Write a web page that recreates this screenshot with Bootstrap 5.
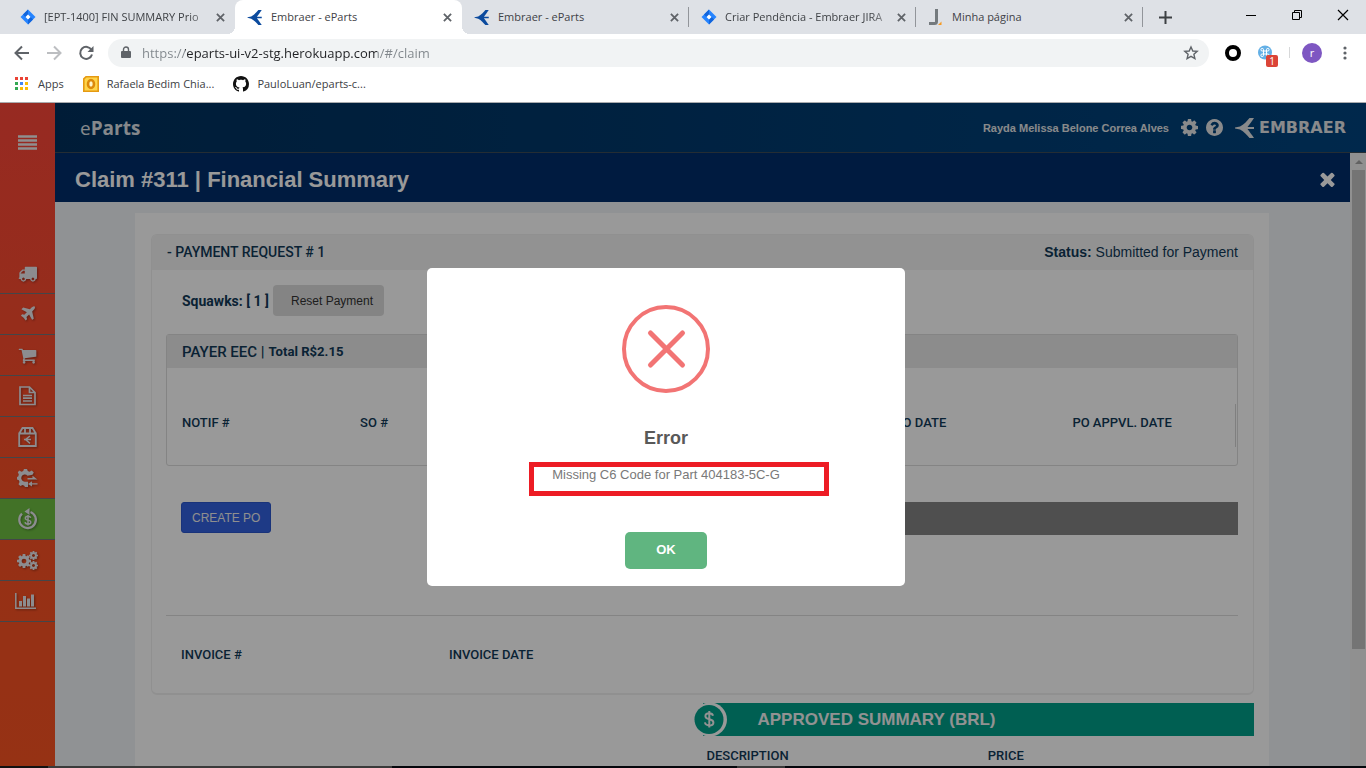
<!DOCTYPE html>
<html lang="en">
<head>
<meta charset="utf-8">
<meta name="viewport" content="width=device-width, initial-scale=1">
<title>Embraer - eParts</title>
<link href="https://cdn.jsdelivr.net/npm/bootstrap@5.3.0/dist/css/bootstrap.min.css" rel="stylesheet">
<style>
  :root { --ui: "Open Sans", "Noto Sans", sans-serif; --app: "Liberation Sans", Arial, sans-serif; --label: Roboto, "Liberation Sans", sans-serif; --ink: #113a58; }
  body { font-family: var(--app); font-size: 13px; line-height: 16px; color: var(--ink); }
  svg { display: block; flex: none; }
  button { font-family: inherit; }
  .plain { border: 0; background: none; padding: 0; color: inherit; display: flex; align-items: center; justify-content: center; }

  /* browser frame */
  .frame { font-family: var(--ui); font-size: 11px; color: #3c4043; background: #fff; border-bottom: 1px solid #a9abae; }
  .tabstrip { background: #dee1e6; height: 34px; padding-left: 8px; }
  .tab { flex: 0 1 227px; min-width: 0; padding: 0 10px 0 12px; position: relative; }
  .tab svg { color: #5f6368; }
  .tab .tab-text { white-space: nowrap; color: #3f4246; }
  .tab .fading { mask-image: linear-gradient(90deg, #000 145px, transparent 172px); -webkit-mask-image: linear-gradient(90deg, #000 145px, transparent 172px); }
  .tab.current { background: #fff; border-radius: 8px 8px 0 0; }
  .tab.current::before, .tab.current::after { content: ""; position: absolute; bottom: 0; width: 8px; height: 8px; }
  .tab.current::before { left: -8px; background: radial-gradient(circle at 0 0, transparent 8px, #fff 8px); }
  .tab.current::after { right: -8px; background: radial-gradient(circle at 100% 0, transparent 8px, #fff 8px); }
  .tab.divided { background: linear-gradient(#92959a, #92959a) right center / 1px 20px no-repeat; }
  .window-keys { gap: 34px; padding-right: 17px; color: #000; }
  .toolbar { height: 37px; padding: 0 16px 0 14px; color: #5f6368; }
  .omnibox { background: #f1f3f4; border-radius: 14px; height: 28px; padding: 0 10px 0 12px; gap: 10px; margin-left: 13px; }
  .omnibox input { border: 0; outline: 0; padding: 0; font-size: 13px; line-height: 20px; min-width: 0; color: transparent; background: linear-gradient(90deg, #80868b 43px, #202124 43px, #202124 235px, #80868b 235px); background-clip: text; -webkit-background-clip: text; }
  .nav-keys { gap: 16px; }
  .avatar { width: 20px; height: 20px; border-radius: 50%; background: #7e57c2; color: #fff; margin: 0 18px 0 12px; }
  .ext-badge { right: -5px; bottom: -6px; width: 12px; height: 12px; background: #db4437; color: #fff; font-size: 10px; line-height: 12px; border-radius: 2px; text-align: center; }
  .favorites { height: 31px; padding: 0 14px 5px; gap: 19px; }
  .favorites a { color: #3c4043; gap: 8px; }

  /* application */
  .side { width: 55px; flex: none; background: linear-gradient(#fc4639, #fa5025 60%, #fa5422); color: #eee; }
  .side .menu-key { height: 150px; padding-top: 32px; align-items: flex-start; }
  .side a { color: #e9e9ee; height: 41px; border-bottom: 1px solid #71767b; }
  .side a svg { filter: drop-shadow(1px 1px 1px rgba(0,0,0,.35)); }
  .side a.active { background: #6ebf41; }
  .topbar { height: 50px; padding: 0 20px 0 25px; background: linear-gradient(90deg, #00305d, #00447f); border-bottom: 1px solid #3c4c58; color: #e4e6e8; }
  .brand { font-family: var(--ui); font-size: 19px; color: #dfe3e8; }
  .user { font-size: 11px; }
  .wordmark { font-family: "DejaVu Sans", sans-serif; font-size: 16px; }
  .claimbar { height: 49px; padding: 4px 15px 0 20px; background: #002d6b; color: #fff; }
  .claimbar h1 { font-size: 22px; line-height: 26px; font-weight: bold; }
  .work { background: #f0f3f7; padding: 11px 81px 0 80px; }
  .sheet { background: #fff; padding: 21px 15px 0 16px; }
  .request { border: 1px solid #f1f1f1; border-bottom-width: 2px; border-radius: 6px; }
  .request-head { background: #f4f4f4; height: 35px; padding: 0 15px 2px; font-size: 14px; border-radius: 5px 5px 0 0; }
  .head-label, th { font-family: var(--label); font-weight: 500; }
  th { font-size: 13px; padding: 0; }
  .column-heads { table-layout: fixed; }
  .column-heads th { padding-left: 15px; }
  .request-body { padding: 15px 15px 30px 14px; }
  .squawks { font-size: 14px; }
  .reset { background: #dcdcdc; border: 0; border-radius: 4px; padding: 0 11px 0 18px; height: 31px; color: #333; font-size: 12px; }
  .payer { border: 1px solid #dcdcdc; border-radius: 3px; margin-top: 18px; }
  .payer-head { background: #e9e9e9; height: 33px; padding: 0 15px; font-size: 15px; }
  .payer-body { padding: 36px 1px 18px 0; }
  .payer-body th { height: 43px; padding-bottom: 6px; }
  .payer-body th:last-child { border-right: 1px solid #d4d4d4; }
  .create { height: 31px; padding: 0 10px; background: #3261df; border: 1px solid #2a55cc; border-radius: 3px; color: #eee; font-size: 12px; }
  .order-row { padding: 36px 0 80px 15px; }
  .strip { background: #848484; height: 33px; }
  .rule { border-top: 1px solid #dcdcdc; padding: 31px 0 0; }
  .summary-head { background: #009e89; color: #f4f4f4; height: 33px; padding-left: 55px; margin-bottom: 12px; font-size: 17px; font-weight: bold; }
  .coin { left: -10px; top: 0; width: 34px; height: 33px; }
  .scroll { width: 16px; flex: none; background: #f1f1f1; padding: 7px 1px 0 2px; color: #a3a3a3; }
  .thumb { background: #c1c1c1; height: 79%; margin-top: 6px; }

  /* error dialog */
  .shade { background: rgba(0,0,0,.4); padding: 0 34px 15px 0; }
  .dialog-box { width: 478px; background: #fff; border-radius: 5px; padding: 37px 0 17px; }
  .dialog-box h2 { font-size: 18px; line-height: 22px; font-weight: bold; color: #595959; margin: 34px 0 18px; }
  .dialog-box p { font-size: 13px; color: #797979; margin: 0 0 49px; }
  .ok { background: #60b580; color: #fff; border: 0; border-radius: 5px; width: 82px; height: 37px; padding: 0 0 2px; font-weight: bold; }
  .highlight { left: 102px; top: 194px; width: 300px; height: 34px; border: 5px solid #ed1c24; pointer-events: none; }
  .taskbar { height: 2px; background: linear-gradient(90deg, #111 48px, #3a3a3a 48px, #3a3a3a 392px, #05070c 392px, #05070c 737px, #3a3a3a 737px, #3a3a3a 785px, #05070c 785px); }
</style>
</head>
<body class="vh-100 d-flex flex-column overflow-hidden">

<svg class="d-none" aria-hidden="true">
  <symbol id="x" viewBox="0 0 10 10"><path d="M1 1l8 8M9 1L1 9" stroke="currentColor" stroke-width="2" fill="none"/></symbol>
  <symbol id="jira" viewBox="0 0 16 16"><path d="M8 0.500L15.500 8 8 15.500 0.500 8z" fill="#2684ff"/><path d="M8 .5v5L5.500 8 3 5.500zM8 15.500v-5L10.500 8l2.500 2.500z" fill="#1265dc"/><path d="M8 5.500L10.500 8 8 10.500 5.500 8z" fill="#fff"/></symbol>
  <symbol id="bird" viewBox="0 0 20 20"><path d="M0 9.600L5 8.500C9 6.500 12 3 14.500 0H19C17 3 14 7 12.500 9h6.500v2h-6.500c1.500 2 4.500 6 6.500 9h-4.500C12 17 9 13.500 5 11.500L0 10.400z" fill="currentColor"/></symbol>
  <symbol id="cog" viewBox="128 128 1536 1536"><path fill="currentColor" d="M1152 896q0-106-75-181t-181-75-181 75-75 181 75 181 181 75 181-75 75-181zm512-109v222q0 12-8 23t-20 13l-185 28q-19 54-39 91 35 50 107 138 10 12 10 25t-9 23q-27 37-99 108t-94 71q-12 0-26-9l-138-108q-44 23-91 38-16 136-29 186-7 28-36 28h-222q-14 0-24.500-8.500t-11.500-21.500l-28-184q-49-16-90-37l-141 107q-10 9-25 9-14 0-25-11-126-114-165-168-7-10-7-23 0-12 8-23 15-21 51-66.500t54-70.500q-27-50-41-99l-183-27q-13-2-21-12.500t-8-23.500v-222q0-12 8-23t19-13l186-28q14-46 39-92-40-57-107-138-10-12-10-24 0-10 9-23 26-36 98.500-107.500t94.500-71.500q13 0 26 10l138 107q44-23 91-38 16-136 29-186 7-28 36-28h222q14 0 24.500 8.500t11.500 21.500l28 184q49 16 90 37l142-107q9-9 24-9 13 0 25 10 129 119 165 170 7 8 7 22 0 12-8 23-15 21-51 66.500t-54 70.500q26 50 41 98l183 28q13 2 21 12.500t8 23.500z"/></symbol>
</svg>

<header class="frame flex-shrink-0">
  <div class="tabstrip d-flex align-items-stretch">
    <div class="tab d-flex align-items-center gap-2"><svg width="16" height="16"><use href="#jira"/></svg><span class="tab-text fading flex-fill">[EPT-1400] FIN SUMMARY Prio</span><button class="plain" aria-label="Close tab"><svg width="9" height="9"><use href="#x"/></svg></button></div>
    <div class="tab current d-flex align-items-center gap-2"><svg width="16" height="15" style="color:#0b4a9e"><use href="#bird"/></svg><span class="tab-text flex-fill">Embraer - eParts</span><button class="plain" aria-label="Close tab"><svg width="9" height="9"><use href="#x"/></svg></button></div>
    <div class="tab divided d-flex align-items-center gap-2"><svg width="16" height="15" style="color:#0b4a9e"><use href="#bird"/></svg><span class="tab-text flex-fill">Embraer - eParts</span><button class="plain" aria-label="Close tab"><svg width="9" height="9"><use href="#x"/></svg></button></div>
    <div class="tab divided d-flex align-items-center gap-2"><svg width="16" height="16"><use href="#jira"/></svg><span class="tab-text fading flex-fill">Criar Pendência - Embraer JIRA</span><button class="plain" aria-label="Close tab"><svg width="9" height="9"><use href="#x"/></svg></button></div>
    <div class="tab divided d-flex align-items-center gap-2"><svg width="16" height="17" viewBox="0 0 16 17"><path d="M8.500 0v12.500q0 2-2 2H1" stroke="#747a7e" stroke-width="3" fill="none"/><path d="M13.500 12.500V16h-3.500z" fill="#f59a23"/></svg><span class="tab-text flex-fill">Minha página</span><button class="plain" aria-label="Close tab"><svg width="9" height="9"><use href="#x"/></svg></button></div>
    <button class="plain ms-3" aria-label="New tab"><svg width="13" height="13" viewBox="0 0 13 13"><path d="M6.500 0v13M0 6.500h13" stroke="#3c4043" stroke-width="2"/></svg></button>
    <div class="window-keys d-flex align-items-center ms-auto pb-1">
      <button class="plain" aria-label="Minimize"><svg width="12" height="11"><path d="M1 5.500h10" stroke="#000"/></svg></button>
      <button class="plain" aria-label="Restore"><svg width="12" height="12"><path d="M1.500 3.500h7v7h-7zM3.500 3V1.500h7v7H9" fill="none" stroke="#000"/></svg></button>
      <button class="plain" aria-label="Close"><svg width="12" height="12"><path d="M1 1l10 10M11 1L1 11" stroke="#000" stroke-width="1.200"/></svg></button>
    </div>
  </div>
  <div class="toolbar d-flex align-items-center">
    <div class="nav-keys d-flex">
      <button class="plain" aria-label="Back"><svg width="16" height="16" viewBox="0 0 16 16"><path d="M15 8H2M8 1.500L1.500 8 8 14.500" fill="none" stroke="currentColor" stroke-width="2"/></svg></button>
      <button class="plain" aria-label="Forward"><svg width="16" height="16" viewBox="0 0 16 16"><path d="M1 8h13M8 1.500L14.500 8 8 14.500" fill="none" stroke="#bcbec1" stroke-width="2"/></svg></button>
      <button class="plain" aria-label="Reload"><svg width="17" height="16" viewBox="0 0 17 16"><path d="M13.500 5A6 6 0 1 0 14 9.500" fill="none" stroke="currentColor" stroke-width="2"/><path d="M15.500 1v6h-6z" fill="currentColor"/></svg></button>
    </div>
    <div class="omnibox d-flex align-items-center flex-fill">
      <svg width="12" height="14" viewBox="0 0 12 14"><path d="M2 5h8q1 0 1 1v5q0 1-1 1H2q-1 0-1-1V6q0-1 1-1z" fill="currentColor"/><path d="M3.500 5V3.500a2.500 2.500 0 0 1 5 0V5" fill="none" stroke="currentColor" stroke-width="1.400"/></svg>
      <input class="flex-fill" type="text" aria-label="Address" value="https://eparts-ui-v2-stg.herokuapp.com/#/claim">
      <button class="plain" aria-label="Bookmark"><svg width="16" height="16" viewBox="0 0 16 16"><path d="M8 2l1.800 4 4.400.4-3.300 2.900 1 4.300L8 11.300l-3.900 2.300 1-4.300L1.800 6.400 6.200 6z" fill="none" stroke="currentColor" stroke-width="1.400"/></svg></button>
    </div>
    <div class="d-flex align-items-center ms-3">
      <svg width="16" height="16"><circle cx="8" cy="8" r="6" fill="none" stroke="#000" stroke-width="4"/></svg>
      <span class="position-relative mx-3"><svg width="16" height="16" viewBox="0 0 16 16"><circle cx="8" cy="7.500" r="7" fill="#64b0e6"/><path d="M6.500 6h3v3h-3zM6.500 6H5.200A1.300 1.300 0 1 1 6.500 4.700zM9.500 6V4.700A1.300 1.300 0 1 1 10.800 6zM9.500 9h1.300a1.300 1.300 0 1 1-1.300 1.300zM6.500 9v1.300A1.300 1.300 0 1 1 5.200 9z" fill="none" stroke="#fff"/></svg><span class="ext-badge position-absolute">1</span></span>
      <span class="vr align-self-center"></span>
      <button class="plain avatar" aria-label="Profile">r</button>
      <button class="plain" aria-label="Menu"><svg width="10" height="14"><g fill="#5f6368"><circle cx="5" cy="2" r="1.600"/><circle cx="5" cy="7" r="1.600"/><circle cx="5" cy="12" r="1.600"/></g></svg></button>
    </div>
  </div>
  <nav class="favorites d-flex align-items-center">
    <a href="#" class="d-flex align-items-center text-decoration-none"><svg width="16" height="14" viewBox="0 0 16 14"><path d="M1 0h3v3H1zM6 0h3v3H6zM11 0h3v3h-3z" fill="#ea4335"/><path d="M1 5h3v3H1zM1 10h3v3H1z" fill="#34a853"/><path d="M6 5h3v3H6z" fill="#4285f4"/><path d="M11 5h3v3h-3zM6 10h3v3H6zM11 10h3v3h-3z" fill="#fbbc05"/></svg>Apps</a>
    <a href="#" class="d-flex align-items-center text-decoration-none"><svg width="16" height="16" viewBox="0 0 16 16"><path d="M.8 2.800L3 .8h12.200v14.400H.8z" fill="#ffd54a" stroke="#e59a12" stroke-width="1.600"/><ellipse cx="8" cy="8" rx="3" ry="4" fill="#fff6c9" stroke="#dd8a0a" stroke-width="2.600"/></svg>Rafaela Bedim Chia...</a>
    <a href="#" class="d-flex align-items-center text-decoration-none"><svg width="16" height="16" viewBox="0 0 16 16"><path fill="#111" d="M8 0C3.580 0 0 3.580 0 8c0 3.540 2.290 6.530 5.470 7.590.4.070.55-.17.55-.38 0-.19-.01-.82-.01-1.490-2.010.37-2.530-.49-2.690-.94-.09-.23-.48-.94-.82-1.130-.28-.15-.68-.52-.01-.53.63-.01 1.080.58 1.230.82.72 1.210 1.870.87 2.330.66.07-.52.28-.87.51-1.070-1.780-.2-3.640-.89-3.640-3.950 0-.87.31-1.590.82-2.150-.08-.2-.36-1.020.08-2.120 0 0 .67-.21 2.200.82.64-.18 1.320-.27 2-.27.68 0 1.360.09 2 .27 1.530-1.040 2.200-.82 2.200-.82.44 1.100.16 1.920.08 2.120.51.56.82 1.270.82 2.150 0 3.070-1.870 3.750-3.650 3.950.29.25.54.73.54 1.480 0 1.070-.01 1.930-.01 2.200 0 .21.15.46.55.38A8.013 8.013 0 0 0 16 8c0-4.420-3.580-8-8-8z"/></svg>PauloLuan/eparts-c...</a>
  </nav>
</header>

<div class="d-flex flex-fill position-relative overflow-hidden">
  <nav class="side d-flex flex-column">
    <button class="plain menu-key" aria-label="Menu"><svg width="19" height="16"><path d="M0 1.500h19M0 5.500h19M0 9.500h19M0 13.500h19" stroke="currentColor" stroke-width="2.600"/></svg></button>
    <a href="#" class="d-flex align-items-center justify-content-center" aria-label="Shipping"><svg width="19" height="19" viewBox="64 0 1792 1792"><path fill="currentColor" d="M704 1408q0-52-38-90t-90-38-90 38-38 90 38 90 90 38 90-38 38-90zm-384-512h384v-256h-158q-13 0-22 9l-195 195q-9 9-9 22v30zm1280 512q0-52-38-90t-90-38-90 38-38 90 38 90 90 38 90-38 38-90zm256-1088v1024q0 15-4 26.500t-13.500 18.500-16.500 11.500-23.500 6-22.500 2-25.500 0-22.500-.5q0 106-75 181t-181 75-181-75-75-181h-384q0 106-75 181t-181 75-181-75-75-181h-64q-3 0-22.500.5t-25.500 0-22.500-2-23.500-6-16.500-11.500-13.500-18.500-4-26.500q0-26 19-45t45-19v-320q0-8-.5-35t0-38 2.500-34.500 6.500-37 14-30.500 22.500-30l198-198q19-19 50.500-32t58.500-13h160v-192q0-26 19-45t45-19h1024q26 0 45 19t19 45z"/></svg></a>
    <a href="#" class="d-flex align-items-center justify-content-center" aria-label="Flights"><svg width="18" height="18" viewBox="0 0 1792 1792"><path fill="currentColor" d="M1568 160q44 52 12 148t-108 172l-161 161 160 696q5 19-12 33l-128 96q-7 6-19 6-4 0-7-1-15-3-21-16l-279-508-259 259 53 194q5 17-8 31l-96 96q-9 9-23 9h-2q-15-2-24-13l-189-252-252-189q-11-7-13-23-1-13 9-25l96-97q9-9 23-9 6 0 8 1l194 53 259-259-508-279q-14-8-17-24-2-16 9-27l128-128q14-13 30-8l665 159 160-160q76-76 172-108t148 12z"/></svg></a>
    <a href="#" class="d-flex align-items-center justify-content-center" aria-label="Cart"><svg width="19" height="19" viewBox="0 0 1792 1792"><path fill="currentColor" d="M704 1536q0 52-38 90t-90 38-90-38-38-90 38-90 90-38 90 38 38 90zm896 0q0 52-38 90t-90 38-90-38-38-90 38-90 90-38 90 38 38 90zm128-1088v512q0 24-16.500 42.500t-40.500 21.500l-1044 122q13 60 13 70 0 16-24 64h920q26 0 45 19t19 45-19 45-45 19h-1024q-26 0-45-19t-19-45q0-11 8-31.500t16-36 21.500-40 15.500-29.500l-177-823h-204q-26 0-45-19t-19-45 19-45 45-19h256q16 0 28.500 6.500t19.500 15.500 13 24.500 8 26 5.500 29.500 4.500 26h1201q26 0 45 19t19 45z"/></svg></a>
    <a href="#" class="d-flex align-items-center justify-content-center" aria-label="Documents"><svg width="17" height="20" viewBox="0 0 17 20" fill="none" stroke="currentColor" stroke-width="1.700"><path d="M1 1h9.500L16 6.500V18.500H1zM10.500 1v5.500H16M4 9.500h9M4 12.200h9M4 15h9"/></svg></a>
    <a href="#" class="d-flex align-items-center justify-content-center" aria-label="Returns"><svg width="19" height="20" viewBox="0 0 19 20" fill="none" stroke="currentColor" stroke-width="1.800"><path d="M1.200 6.500h16.600V19H1.200zM1.200 6.500L4.500 1h10l3.300 5.500M7 1v5.500M12 1v5.500"/><path d="M12 9l-4.500 3.600L12 16.300M6 12.600h7" stroke-width="1.500"/></svg></a>
    <a href="#" class="d-flex align-items-center justify-content-center" aria-label="Exchange"><svg width="21" height="18" viewBox="0 0 21 18"><path d="M15.500 5.800l1.300-2.200-2-2-2.300 1.100L10.800 2 10 0H7l-.8 2-1.700.7L2.300 1.600.8 3.200l1 2.300L1.200 7.500 0 8v2.500l1.800.8.700 1.700-1 2.200 1.800 1.800 2.300-1 1.600.7.800 1.300H11v-5.300H8.200a3.600 3.600 0 1 1 2.300-6z" fill="currentColor"/><path d="M10.500 9h5V6.800L20.500 10.500h-10zM20.500 14.200h-5.500v-2L11 15l4 2.600v-2h5.500z" fill="currentColor"/></svg></a>
    <a href="#" class="d-flex align-items-center justify-content-center active" aria-label="Claims"><svg width="20" height="22" viewBox="0 0 20 22"><path d="M12.500 4a8.300 8.300 0 1 1-8.500 1.600" fill="none" stroke="currentColor" stroke-width="2.200"/><path d="M6.500 3.600L11.500 0v7z" fill="currentColor"/><path d="M12.700 9.900c-.3-1.200-1.400-1.600-2.700-1.600-1.500 0-2.600.7-2.600 1.900 0 2.700 5.400 1.100 5.400 4 0 1.200-1.200 1.900-2.700 1.900-1.600 0-2.800-.6-3-2M10 7v10.500" fill="none" stroke="currentColor" stroke-width="1.500"/></svg></a>
    <a href="#" class="d-flex align-items-center justify-content-center" aria-label="Settings"><svg width="21" height="19"><use href="#cog" x="0" y="3" width="14" height="14"/><use href="#cog" x="12" y="0" width="9" height="9"/><use href="#cog" x="12" y="10" width="9" height="9"/></svg></a>
    <a href="#" class="d-flex align-items-center justify-content-center pe-1" aria-label="Reports"><svg width="21" height="16" viewBox="0 0 21 16"><path d="M.8 0v15.200H21" fill="none" stroke="currentColor" stroke-width="1.500"/><path d="M4 8h3v5.500H4zM8 3h3v10.500H8zM12 5.500h3v8h-3zM16 1.500h3v12h-3z" fill="currentColor"/></svg></a>
  </nav>

  <div class="d-flex flex-column flex-fill">
    <header class="topbar d-flex align-items-center flex-shrink-0">
      <a href="#" class="brand text-decoration-none">e<b>Parts</b></a>
      <span class="user fw-bold ms-auto">Rayda Melissa Belone Correa Alves</span>
      <button class="plain ms-2 me-2 ps-1" aria-label="Settings"><svg width="17" height="17"><use href="#cog"/></svg></button>
      <button class="plain me-2 pe-1" aria-label="Help"><svg width="17" height="17" viewBox="128 128 1536 1536"><path fill="currentColor" d="M1024 1376v-192q0-14-9-23t-23-9h-192q-14 0-23 9t-9 23v192q0 14 9 23t23 9h192q14 0 23-9t9-23zm256-672q0-88-55.500-163t-138.500-116-170-41q-243 0-371 213-15 24 8 42l132 100q7 6 19 6 16 0 25-12 53-68 86-92 34-24 86-24 48 0 85.500 26t37.500 59q0 38-20 61t-68 45q-63 28-115.500 86.500t-52.500 125.500v36q0 14 9 23t23 9h192q14 0 23-9t9-23q0-19 21.500-49.500t54.500-49.500q32-18 49-28.500t46-35 44.500-48 28-60.500 12.500-81zm384 192q0 209-103 385.500t-279.500 279.500-385.500 103-385.500-103-279.500-279.500-103-385.500 103-385.500 279.500-279.500 385.500-103 385.500 103 279.500 279.500 103 385.500z"/></svg></button>
      <svg width="20" height="20"><use href="#bird"/></svg>
      <span class="wordmark fw-bold ms-1">EMBRAER</span>
    </header>
    <div class="d-flex flex-fill overflow-hidden">
      <main class="d-flex flex-column flex-fill">
        <div class="claimbar d-flex align-items-center justify-content-between flex-shrink-0">
          <h1 class="m-0">Claim #311 | Financial Summary</h1>
          <button class="plain" aria-label="Close claim"><svg width="15" height="15" viewBox="302 302 1188 1252"><path fill="currentColor" d="M1490 1322q0 40-28 68l-136 136q-28 28-68 28t-68-28l-294-294-294 294q-28 28-68 28t-68-28l-136-136q-28-28-28-68t28-68l294-294-294-294q-28-28-28-68t28-68l136-136q28-28 68-28t68 28l294 294 294-294q28-28 68-28t68 28l136 136q28 28 28 68t-28 68l-294 294 294 294q28 28 28 68z"/></svg></button>
        </div>
        <div class="work d-flex flex-column flex-fill overflow-hidden">
          <div class="sheet flex-fill">
            <section class="request">
              <div class="request-head d-flex align-items-center justify-content-between">
                <span class="head-label">- PAYMENT REQUEST # 1</span>
                <span><b>Status:</b> Submitted for Payment</span>
              </div>
              <div class="request-body">
                <div class="d-flex align-items-center gap-1 ps-3">
                  <span class="squawks head-label fw-bold">Squawks: [ 1 ]</span>
                  <button class="reset">Reset Payment</button>
                </div>
                <div class="payer">
                  <div class="payer-head d-flex align-items-center gap-1"><span class="head-label">PAYER EEC |</span><small class="head-label fw-bold">Total R$2.15</small></div>
                  <div class="payer-body">
                    <table class="column-heads w-100"><thead><tr><th>NOTIF #</th><th>SO #</th><th></th><th></th><th>PO DATE</th><th>PO APPVL. DATE</th></tr></thead></table>
                  </div>
                </div>
                <div class="order-row d-flex justify-content-between align-items-start">
                  <button class="create">CREATE PO</button>
                  <div class="strip w-50"></div>
                </div>
                <div class="rule">
                  <table class="column-heads w-100"><thead><tr><th>INVOICE #</th><th>INVOICE DATE</th><th></th><th></th></tr></thead></table>
                </div>
              </div>
            </section>
            <section class="w-50 ms-auto mt-2 position-relative">
              <div class="summary-head d-flex align-items-center">APPROVED SUMMARY (BRL)</div>
              <svg class="coin position-absolute" viewBox="0 0 34 33"><circle cx="17" cy="16.500" r="17" fill="#fff"/><circle cx="16" cy="16.500" r="14.500" fill="#009e89"/><path d="M20 12.800c-.4-1.700-1.900-2.500-3.800-2.500-2.200 0-3.800 1.200-3.800 2.900 0 4.200 8 2 8 6.200 0 1.900-1.700 3-4 3-2.400 0-4.100-1-4.500-3M16.300 8v16.500" fill="none" stroke="#f4f4f4" stroke-width="2"/></svg>
              <table class="w-100"><thead><tr><th class="ps-1" style="width:51%">DESCRIPTION</th><th class="ps-1">PRICE</th></tr></thead></table>
            </section>
          </div>
        </div>
      </main>
      <div class="scroll"><svg class="mx-auto" width="8" height="4"><path d="M0 4l4-4 4 4z" fill="currentColor"/></svg><div class="thumb"></div></div>
    </div>
  </div>

  <div class="shade position-absolute top-0 start-0 w-100 h-100 d-flex align-items-center justify-content-center">
    <div class="dialog-box position-relative d-flex flex-column align-items-center" role="alertdialog" aria-labelledby="err-title" aria-describedby="err-text">
      <svg width="88" height="88"><circle cx="44" cy="44" r="42" fill="none" stroke="#f27474" stroke-width="4"/><path d="M28.500 28L60.500 60M60.500 28L28.500 60" stroke="#f27474" stroke-width="5" stroke-linecap="round"/></svg>
      <h2 id="err-title">Error</h2>
      <p id="err-text">Missing C6 Code for Part 404183-5C-G</p>
      <button class="ok">OK</button>
      <span class="highlight position-absolute"></span>
    </div>
  </div>
</div>
<div class="taskbar flex-shrink-0"></div>
<script src="https://cdn.jsdelivr.net/npm/bootstrap@5.3.0/dist/js/bootstrap.bundle.min.js"></script>
</body>
</html>
